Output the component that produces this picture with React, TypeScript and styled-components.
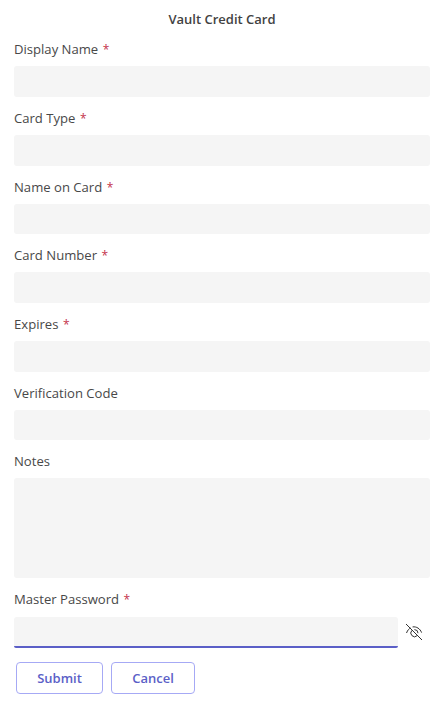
import React from "react"
import styled, { createGlobalStyle } from "styled-components"

const GlobalStyle = createGlobalStyle`
  html, body {
    margin: 0;
    padding: 0;
    background: #fff;
  }
  body {
    font-family: "Open Sans", "Noto Sans", sans-serif;
    color: #484848;
  }
`

const Page = styled.form`
  width: 442px;
  height: 711px;
  box-sizing: border-box;
  padding: 11px 12px 0 14px;
  overflow: hidden;
`

const Title = styled.h1`
  margin: 0 0 4.4px;
  height: 17px;
  font-size: 13px;
  line-height: 17px;
  font-weight: 600;
  text-align: center;
  color: #424242;
`

const Field = styled.div`
  display: flex;
  flex-direction: column;
  margin-bottom: 4px;
`

const NotesField = styled(Field)`
  margin-bottom: 4.5px;
`

const Label = styled.label`
  display: block;
  height: 34px;
  box-sizing: border-box;
  padding-top: 8px;
  font-size: 13.1px;
  line-height: 19px;
  color: #484848;
`

const MasterLabel = styled(Label)`
  padding-top: 7px;
`

const Required = styled.span`
  color: #c4314b;
  margin-left: 4.5px;
  font-size: 12px;
`

const Input = styled.input`
  display: block;
  width: 416px;
  height: 30.68px;
  box-sizing: border-box;
  border: 0;
  border-radius: 3px;
  background: #f5f5f5;
  padding: 0 12px;
  outline: none;
`

const TextArea = styled.textarea`
  display: block;
  width: 416px;
  height: 100px;
  box-sizing: border-box;
  border: 0;
  border-radius: 3px;
  background: #f5f5f5;
  padding: 6px 12px;
  resize: none;
  outline: none;
`

const PasswordRow = styled.div`
  display: flex;
  align-items: center;
  gap: 7px;
`

const PasswordInput = styled(Input)`
  width: 384px;
  height: 31px;
  border-bottom: 2px solid #5b5fc7;
  border-radius: 3px 3px 2px 2px;
`

const EyeButton = styled.button`
  width: 18px;
  height: 18px;
  padding: 0;
  border: 0;
  background: none;
  display: flex;
  align-items: center;
  justify-content: center;
  color: #333;
`

const Actions = styled.div`
  display: flex;
  gap: 8px;
  margin: 14px 0 0 2px;
`

const ActionButton = styled.button<{ $width: number }>`
  width: ${(p) => p.$width}px;
  height: 32px;
  box-sizing: border-box;
  border: 1px solid #a6a9f5;
  border-radius: 4px;
  background: #fff;
  color: #5b5fc7;
  font-family: inherit;
  font-size: 13px;
  font-weight: 600;
  padding: 0;
`

const EyeOffIcon = () => (
  <svg width="18" height="18" viewBox="0 0 18 18" fill="none" stroke="currentColor" strokeWidth="1">
    <path d="M1 1l16 16" />
    <path d="M1.5 10C2.6 7 4.2 5.6 5.6 5" />
    <path d="M7.6 3.9C11.6 3.4 15 5.6 16.6 9.6" />
    <path d="M6.9 7.4a3.7 3.7 0 0 0 5.3 5.2" />
    <path d="M9.4 6.6a3.6 3.6 0 0 1 3.6 3.6" />
  </svg>
)

const fields = [
  { label: "Display Name", required: true },
  { label: "Card Type", required: true },
  { label: "Name on Card", required: true },
  { label: "Card Number", required: true },
  { label: "Expires", required: true },
  { label: "Verification Code", required: false },
]

export default function App() {
  return (
    <>
      <GlobalStyle />
      <Page>
        <Title>Vault Credit Card</Title>
        {fields.map((f) => (
          <Field key={f.label}>
            <Label>
              {f.label}
              {f.required && <Required>*</Required>}
            </Label>
            <Input />
          </Field>
        ))}
        <NotesField>
          <Label>Notes</Label>
          <TextArea />
        </NotesField>
        <Field>
          <MasterLabel>
            Master Password
            <Required>*</Required>
          </MasterLabel>
          <PasswordRow>
            <PasswordInput type="password" />
            <EyeButton type="button">
              <EyeOffIcon />
            </EyeButton>
          </PasswordRow>
        </Field>
        <Actions>
          <ActionButton type="button" $width={87}>Submit</ActionButton>
          <ActionButton type="button" $width={84}>Cancel</ActionButton>
        </Actions>
      </Page>
    </>
  )
}
